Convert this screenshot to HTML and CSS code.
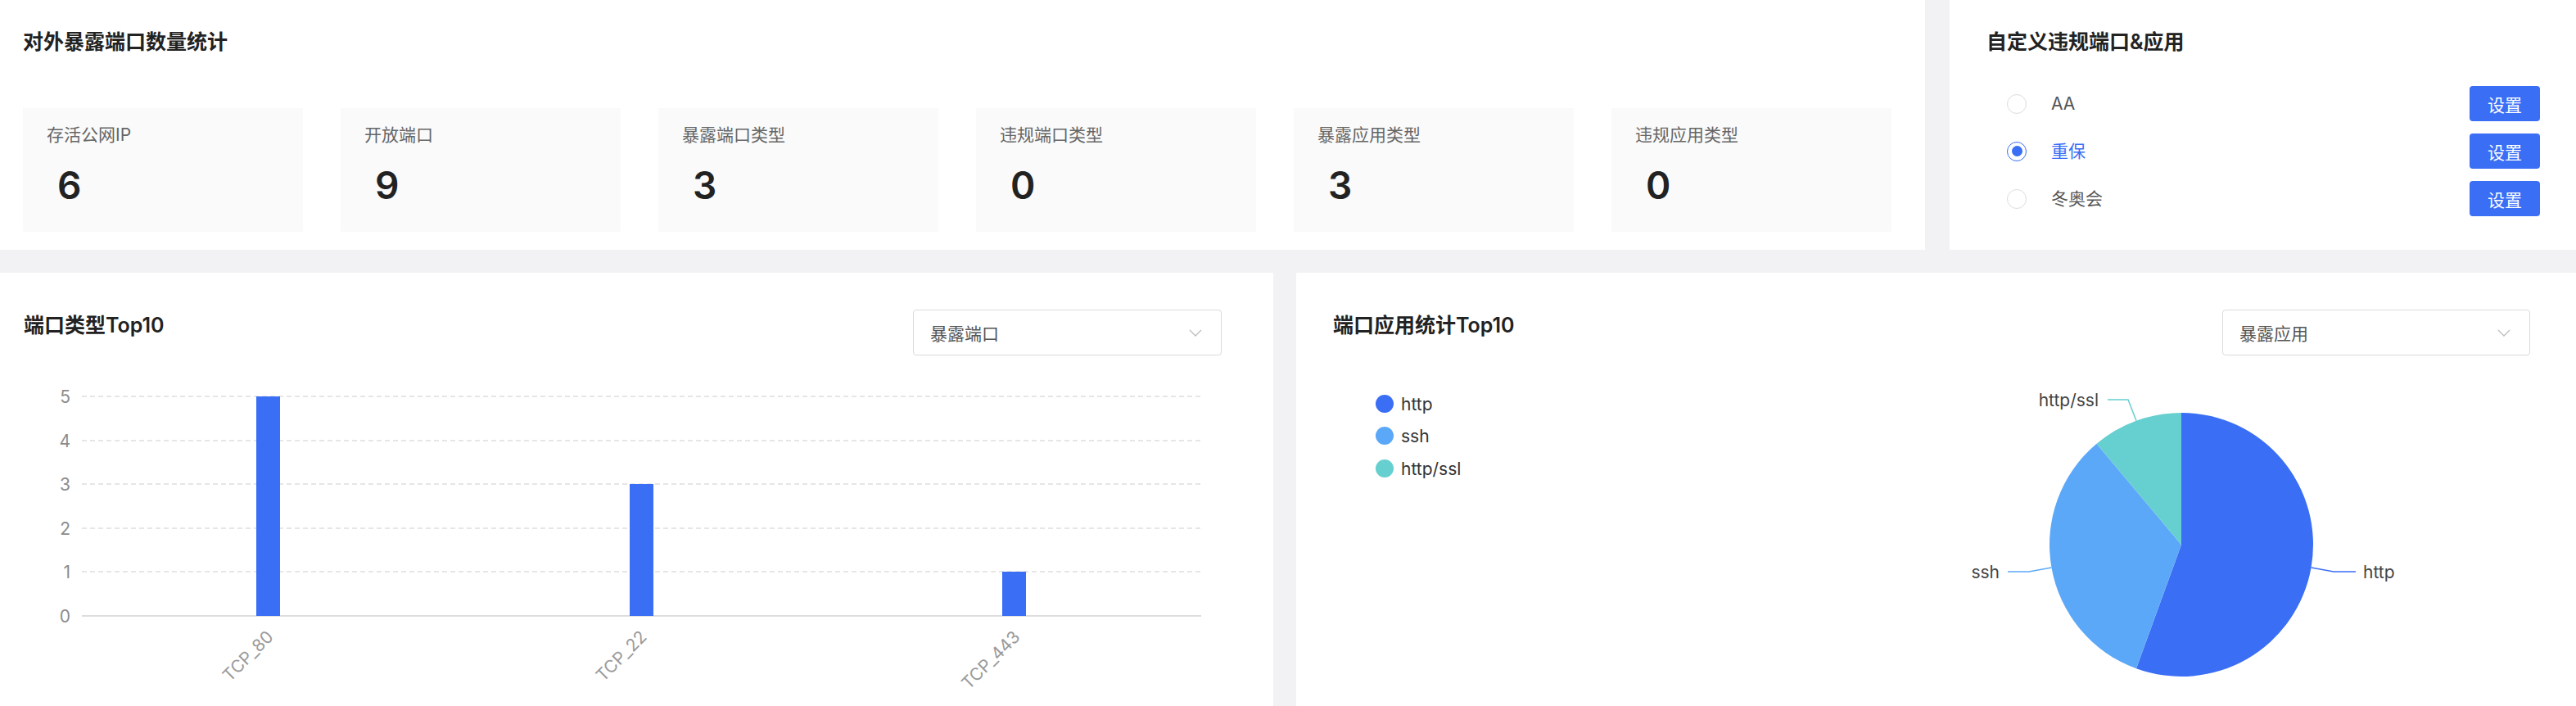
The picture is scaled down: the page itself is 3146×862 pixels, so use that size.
FILE: index.html
```html
<!DOCTYPE html>
<html lang="zh-CN">
<head>
<meta charset="utf-8">
<title>端口统计</title>
<link rel="stylesheet" href="styles.css">
</head>
<body>
<div class="page">
  <div class="row row-top">
    <section class="panel stats">
      <h2 class="title">对外暴露端口数量统计</h2>
      <div class="cards">
        <div class="card"><div class="card-label">存活公网IP</div><div class="card-value">6</div></div>
        <div class="card"><div class="card-label">开放端口</div><div class="card-value">9</div></div>
        <div class="card"><div class="card-label">暴露端口类型</div><div class="card-value">3</div></div>
        <div class="card"><div class="card-label">违规端口类型</div><div class="card-value">0</div></div>
        <div class="card"><div class="card-label">暴露应用类型</div><div class="card-value">3</div></div>
        <div class="card"><div class="card-label">违规应用类型</div><div class="card-value">0</div></div>
      </div>
    </section>
    <section class="panel custom">
      <h2 class="title">自定义违规端口&amp;应用</h2>
      <ul class="rule-list">
        <li class="rule"><span class="radio"></span><span class="rule-name">AA</span><button class="btn">设置</button></li>
        <li class="rule"><span class="radio checked"></span><span class="rule-name active">重保</span><button class="btn">设置</button></li>
        <li class="rule"><span class="radio"></span><span class="rule-name">冬奥会</span><button class="btn">设置</button></li>
      </ul>
    </section>
  </div>
  <div class="row row-bottom">
    <section class="panel chart-panel ports-panel">
      <div class="chart-head">
        <h2 class="title">端口类型Top10</h2>
        <div class="select"><span>暴露端口</span><svg class="chev" width="16" height="9" viewBox="0 0 16 9"><path d="M1 1 L8 8 L15 1" fill="none" stroke="#bdbdbd" stroke-width="1.3"/></svg></div>
      </div>
      <svg class="chart bar-chart" width="1555" height="428" viewBox="0 0 1555 428">
        <g class="grid" stroke="#dedede" stroke-width="1.5" stroke-dasharray="6 4">
          <line x1="100" y1="50" x2="1467" y2="50"/>
          <line x1="100" y1="104" x2="1467" y2="104"/>
          <line x1="100" y1="157" x2="1467" y2="157"/>
          <line x1="100" y1="211" x2="1467" y2="211"/>
          <line x1="100" y1="264" x2="1467" y2="264"/>
        </g>
        <line x1="100" y1="318" x2="1467" y2="318" stroke="#dddddd" stroke-width="2"/>
        <g class="ylabels" fill="#8c8c8c" font-size="21" text-anchor="end">
          <text x="86" y="50" dominant-baseline="central">5</text>
          <text x="86" y="104" dominant-baseline="central">4</text>
          <text x="86" y="157" dominant-baseline="central">3</text>
          <text x="86" y="211" dominant-baseline="central">2</text>
          <text x="86" y="264" dominant-baseline="central">1</text>
          <text x="86" y="318" dominant-baseline="central">0</text>
        </g>
        <g fill="#3a6ef5">
          <rect x="313" y="50" width="29" height="268"/>
          <rect x="769" y="157" width="29" height="161"/>
          <rect x="1224" y="264" width="29" height="54"/>
        </g>
        <g class="xlabels" fill="#9a9a9a" font-size="21" text-anchor="end">
          <text x="335" y="345" transform="rotate(-45 335 345)">TCP_80</text>
          <text x="791" y="345" transform="rotate(-45 791 345)">TCP_22</text>
          <text x="1247" y="345" transform="rotate(-45 1247 345)">TCP_443</text>
        </g>
      </svg>
    </section>
    <section class="panel chart-panel apps-panel">
      <div class="chart-head">
        <h2 class="title">端口应用统计Top10</h2>
        <div class="select"><span>暴露应用</span><svg class="chev" width="16" height="9" viewBox="0 0 16 9"><path d="M1 1 L8 8 L15 1" fill="none" stroke="#bdbdbd" stroke-width="1.3"/></svg></div>
      </div>
      <svg class="chart pie-chart" width="1563" height="428" viewBox="0 0 1563 428">
        <g class="legend" font-size="21" fill="#333">
          <circle cx="108" cy="59" r="11" fill="#3a6ef5"/>
          <text x="128" y="59" dominant-baseline="central">http</text>
          <circle cx="108" cy="98" r="11" fill="#5ca8f8"/>
          <text x="128" y="98" dominant-baseline="central">ssh</text>
          <circle cx="108" cy="138" r="11" fill="#66cfcf"/>
          <text x="128" y="138" dominant-baseline="central">http/ssl</text>
        </g>
        <path d="M1081,231 L1081,70 A161,161 0 1 1 1025.93,382.29 Z" fill="#3a6ef5"/>
        <path d="M1081,231 L1025.93,382.29 A161,161 0 0 1 977.51,107.67 Z" fill="#5ca8f8"/>
        <path d="M1081,231 L977.51,107.67 A161,161 0 0 1 1081,70 Z" fill="#66cfcf"/>
        <polyline points="1239.6,259 1267,264 1294,264" fill="none" stroke="#3a6ef5" stroke-width="1.5"/>
        <polyline points="922.4,259 895,264 869,264" fill="none" stroke="#5ca8f8" stroke-width="1.5"/>
        <polyline points="1026,79.7 1016,54 991,54" fill="none" stroke="#66cfcf" stroke-width="1.5"/>
        <g font-size="21" fill="#444">
          <text x="1303" y="264" dominant-baseline="central">http</text>
          <text x="859" y="264" text-anchor="end" dominant-baseline="central">ssh</text>
          <text x="980" y="54" text-anchor="end" dominant-baseline="central">http/ssl</text>
        </g>
      </svg>
    </section>
  </div>
</div>
</body>
</html>
```

FILE: styles.css
```css
html, body {
  margin: 0;
  padding: 0;
  background: #f2f2f4;
}

body {
  font-family: Inter, "Noto Sans CJK SC", sans-serif;
  width: 3146px;
  height: 862px;
  overflow: hidden;
  color: #222;
}

.row {
  display: grid;
}

.row-top {
  grid-template-columns: 2351px 1fr;
  column-gap: 30px;
  height: 305px;
}

.row-bottom {
  grid-template-columns: 1555px 1fr;
  column-gap: 28px;
  margin-top: 28px;
  height: 529px;
}

.panel {
  background: #fff;
  box-sizing: border-box;
}

.title {
  margin: 0;
  font-size: 25px;
  line-height: 32px;
  font-weight: 600;
  color: #222;
  white-space: nowrap;
}

/* top-left stats */
.stats {
  padding: 35px 0 0 28px;
}

.cards {
  display: grid;
  grid-template-columns: repeat(6, 342px);
  column-gap: 46px;
  margin-top: 65px;
}

.card {
  background: #fafafa;
  height: 151px;
  box-sizing: border-box;
  padding: 19px 29px 0;
}

.card-label {
  font-size: 21px;
  line-height: 28px;
  color: #666;
}

.card-value {
  font-size: 46px;
  line-height: 56px;
  font-weight: 600;
  color: #222;
  margin: 19px 0 0 13px;
}

/* top-right custom rules */
.custom {
  padding: 35px 44px 0 45px;
}

.rule-list {
  list-style: none;
  margin: 38px 0 0;
  padding: 0 0 0 25px;
  display: flex;
  flex-direction: column;
  gap: 15px;
}

.rule {
  display: flex;
  align-items: center;
  height: 43px;
}

.radio {
  width: 24px;
  height: 24px;
  border: 1.5px solid #dcdcdc;
  border-radius: 50%;
  box-sizing: border-box;
  display: flex;
  align-items: center;
  justify-content: center;
  flex: none;
}

.radio.checked {
  border-color: #3a6ef5;
}

.radio.checked::after {
  content: "";
  width: 13px;
  height: 13px;
  border-radius: 50%;
  background: #3a6ef5;
}

.rule-name {
  margin-left: 30px;
  flex: 1;
  font-size: 21px;
  line-height: 28px;
  color: #555;
}

.rule-name.active {
  color: #3a6ef5;
}

.btn {
  width: 86px;
  height: 43px;
  padding: 0;
  border: 0;
  border-radius: 4px;
  background: #3a6ef5;
  color: #fff;
  font-family: "Noto Sans CJK SC", sans-serif;
  font-size: 21px;
  flex: none;
}

/* chart panels */
.chart-panel {
  display: flex;
  flex-direction: column;
  overflow: hidden;
}

.chart-head {
  display: flex;
  justify-content: space-between;
  align-items: flex-start;
  padding: 45px 63px 0 29px;
}

.apps-panel .chart-head {
  padding: 45px 56px 0 45px;
}

.chart-head .title {
  margin-top: 3px;
}

.select {
  width: 377px;
  height: 56px;
  box-sizing: border-box;
  border: 1px solid #dadada;
  border-radius: 4px;
  display: flex;
  align-items: center;
  justify-content: space-between;
  padding: 0 23px 0 20px;
  font-size: 21px;
  color: #555;
}

.apps-panel .select {
  width: 376px;
}

.chev {
  display: block;
}

.chart {
  display: block;
  font-family: Inter, "Noto Sans CJK SC", sans-serif;
}
```
